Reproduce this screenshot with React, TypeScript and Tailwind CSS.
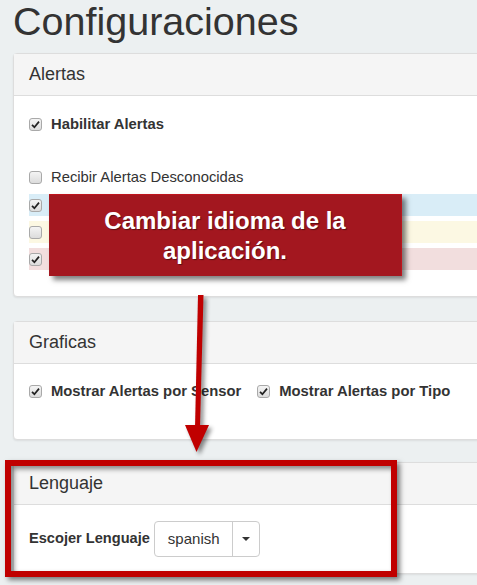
import React from "react";

type Tone = "none" | "info" | "warning" | "danger";

const toneBg: Record<Tone, string> = {
  none: "",
  info: "bg-[#d9edf7]",
  warning: "bg-[#fcf8e3]",
  danger: "bg-[#f2dede]",
};

function Box({ checked }: { checked: boolean }) {
  return (
    <span className="w-[13px] h-[13px] shrink-0 rounded-[3px] border border-[#a9a9a9] bg-gradient-to-b from-[#f4f4f4] to-[#dcdcdc] flex items-center justify-center">
      {checked && (
        <svg width="9" height="9" viewBox="0 0 9 9">
          <path d="M1 4.8 L3.4 7.2 L8 1.6" fill="none" stroke="#222" strokeWidth="1.7" />
        </svg>
      )}
    </span>
  );
}

function CheckRow({
  label,
  checked,
  bold = false,
  tone = "none",
}: {
  label?: string;
  checked: boolean;
  bold?: boolean;
  tone?: Tone;
}) {
  return (
    <div className={`h-[22px] flex items-center gap-[9px] ${toneBg[tone]}`}>
      <Box checked={checked} />
      {label && (
        <span className={`text-[14.8px] text-[#333] ${bold ? "font-bold" : ""}`}>{label}</span>
      )}
    </div>
  );
}

function Panel({ title, children }: { title: string; children: React.ReactNode }) {
  return (
    <div className="ml-[13px] w-[520px] bg-white border border-[#ddd] rounded-[4px] shadow-[0_1px_2px_rgba(0,0,0,0.08)]">
      <div className="h-[42px] bg-[#f5f5f5] border-b border-[#ddd] px-[15px] flex items-center">
        <h3 className="text-[18px] text-[#333]">{title}</h3>
      </div>
      {children}
    </div>
  );
}

export default function App() {
  return (
    <div
      className="relative w-[477px] h-[585px] overflow-hidden bg-[#ecf0f1] text-[#333]"
      style={{ fontFamily: '"Liberation Sans", Arial, sans-serif' }}
    >
      <h1 className="ml-[13px] text-[39.5px] leading-[43px] h-[53px]">Configuraciones</h1>

      {/* Alertas */}
      <Panel title="Alertas">
        <div className="px-[15px] pt-[17px] pb-[26px]">
          <CheckRow label="Habilitar Alertas" checked bold />
          <div className="mt-[31px]">
            <CheckRow label="Recibir Alertas Desconocidas" checked={false} />
          </div>
          {/* rows whose labels sit under the callout */}
          <div className="mt-[6px] flex flex-col gap-[5px]">
            <CheckRow checked tone="info" />
            <CheckRow checked={false} tone="warning" />
            <CheckRow checked tone="danger" />
          </div>
        </div>
      </Panel>

      {/* Graficas */}
      <div className="mt-[24px]">
        <Panel title="Graficas">
          <div className="px-[15px] pt-[16px] pb-[37px] flex gap-[16px]">
            <CheckRow label="Mostrar Alertas por Sensor" checked bold />
            <CheckRow label="Mostrar Alertas por Tipo" checked bold />
          </div>
        </Panel>
      </div>

      {/* Lenguaje */}
      <div className="mt-[22px]">
        <Panel title="Lenguaje">
          <div className="px-[15px] pt-[16px] pb-[16px] flex items-center gap-[4px]">
            <span className="text-[14.6px] font-bold">Escojer Lenguaje</span>
            <div className="flex h-[36px] border border-[#ccc] rounded-[4px] bg-white">
              <span className="w-[78px] flex items-center pl-[13px] text-[15px] border-r border-[#ccc]">
                spanish
              </span>
              <span className="w-[26px] flex items-center justify-center">
                <span className="w-0 h-0 border-x-[4px] border-x-transparent border-t-[4px] border-t-[#333]" />
              </span>
            </div>
          </div>
        </Panel>
      </div>

      {/* annotation: callout */}
      <div className="absolute left-[49px] top-[194px] w-[353px] h-[82px] bg-[#a3171f] border-t border-r border-[#c0141c] shadow-[4px_4px_5px_rgba(0,0,0,0.5)] flex items-center justify-center">
        <p className="text-white font-bold text-[24px] leading-[30px] text-center [text-shadow:1px_1px_1px_rgba(0,0,0,0.45)]">
          Cambiar idioma de la
          <br />
          aplicación.
        </p>
      </div>

      {/* annotation: arrow */}
      <svg
        className="absolute left-0 top-0"
        width="477"
        height="585"
        style={{ filter: "drop-shadow(3px 3px 2px rgba(0,0,0,0.45))" }}
      >
        <polygon points="198,295 203.5,295 200,428 195,428" fill="#c00000" />
        <polygon points="185,425 209,425 196.5,452" fill="#c00000" />
      </svg>

      {/* annotation: frame */}
      <div className="absolute left-[5px] top-[460px] w-[392px] h-[117px] border-[6px] border-[#c00000] shadow-[3px_3px_5px_rgba(0,0,0,0.5),inset_3px_3px_5px_rgba(0,0,0,0.45)]" />
    </div>
  );
}
